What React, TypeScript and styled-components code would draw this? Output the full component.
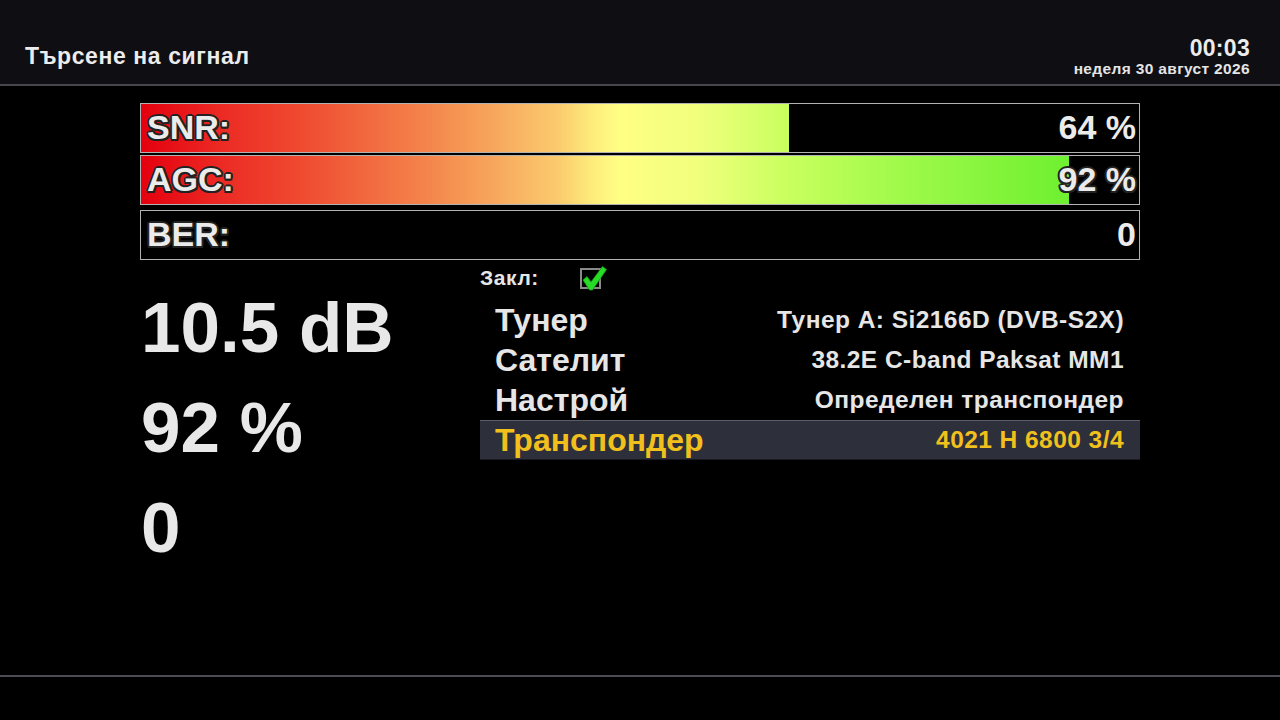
import React from "react";
import styled, { createGlobalStyle } from "styled-components";

const GlobalStyle = createGlobalStyle`
  html, body { margin: 0; padding: 0; background: #000; }
  body { font-family: "Liberation Sans", Arial, sans-serif; color: #e8e8e8; }
  * { box-sizing: border-box; }
`;

const Page = styled.div`
  width: 1280px;
  height: 720px;
  background: #000;
  display: flex;
  flex-direction: column;
  overflow: hidden;
`;

const Header = styled.header`
  height: 86px;
  flex: none;
  background: #0e0e13;
  border-bottom: 2px solid #46464d;
  display: flex;
  justify-content: space-between;
  align-items: flex-end;
  padding: 0 30px 6px 25px;
`;

const Title = styled.h1`
  margin: 0 0 9px 0;
  font-size: 23px;
  font-weight: 700;
  letter-spacing: 0.6px;
  color: #ececec;
  line-height: 26px;
`;

const Clock = styled.div`
  display: flex;
  flex-direction: column;
  align-items: flex-end;
`;

const Time = styled.div`
  font-size: 23px;
  font-weight: 700;
  letter-spacing: 0.3px;
  line-height: 22px;
  color: #ececec;
`;

const DateText = styled.div`
  font-size: 15.5px;
  font-weight: 700;
  letter-spacing: 0.35px;
  line-height: 19px;
  color: #e4e4e4;
`;

const Main = styled.main`
  flex: 1;
  padding: 17px 140px 0 140px;
  display: flex;
  flex-direction: column;
`;

const GRADIENT =
  "linear-gradient(to right, #e4000e 0%, #ec2a24 8%, #ef4a30 16%, #f4864c 29%, #f7aa5e 36%, #fbcc6e 42%, #fdea7a 45%, #ffff84 48%, #f0ff7c 56%, #c8ff5e 65%, #a0fa4a 76%, #6ef030 93%, #62ec2a 100%)";

const Bar = styled.div<{ $fill: number; $gap: number }>`
  height: 50px;
  margin-top: ${(p) => p.$gap}px;
  border: 1px solid #b2b2b2;
  background-color: #000;
  background-image: linear-gradient(to right, transparent ${(p) => p.$fill}%, #000 ${(p) => p.$fill}%), ${GRADIENT};
  display: flex;
  justify-content: space-between;
  align-items: center;
  padding: 0 3px 2px 6px;
  font-size: 34px;
  font-weight: 700;
  color: #ebebeb;
`;

const OUTLINE =
  "-2px 0 #222, 2px 0 #222, 0 -2px #222, 0 2px #222, -1.5px -1.5px #222, 1.5px 1.5px #222, -1.5px 1.5px #222, 1.5px -1.5px #222";

const BarLabel = styled.span`
  text-shadow: ${OUTLINE};
`;

const BarValue = styled.span<{ $outlined?: boolean }>`
  text-shadow: ${(p) => (p.$outlined ? OUTLINE : "none")};
`;

const Lower = styled.div`
  display: flex;
`;

const BigColumn = styled.div`
  width: 340px;
  padding-top: 18px;
  display: flex;
  flex-direction: column;
`;

const BigValue = styled.div`
  font-size: 71px;
  font-weight: 700;
  line-height: 100px;
  color: #e8e8e8;
  padding-left: 1px;
`;

const InfoColumn = styled.div`
  flex: 1;
  display: flex;
  flex-direction: column;
`;

const LockRow = styled.div`
  height: 40px;
  padding-bottom: 4px;
  display: flex;
  align-items: center;
  gap: 41px;
  font-size: 21px;
  font-weight: 700;
  letter-spacing: 0.6px;
  color: #e6e6e6;
`;

const CheckBox = styled.span`
  position: relative;
  width: 21px;
  height: 21px;
  border: 2px solid #8a8a8a;
  display: inline-block;
`;

const CheckMark = styled.svg`
  position: absolute;
  left: -2px;
  top: -5px;
`;

const Row = styled.div<{ $active?: boolean }>`
  height: 40px;
  display: flex;
  justify-content: space-between;
  align-items: center;
  padding: 0 16px 0 15px;
  background: ${(p) => (p.$active ? "#2d2f3b" : "transparent")};
  border-top: 1px solid ${(p) => (p.$active ? "#5a5d68" : "transparent")};
  border-bottom: 1px solid ${(p) => (p.$active ? "#1a1b22" : "transparent")};
  color: ${(p) => (p.$active ? "#f2c01c" : "#e6e6e6")};
`;

const RowLabel = styled.span`
  font-size: 32px;
  font-weight: 700;
`;

const RowValue = styled.span`
  font-size: 24.5px;
  font-weight: 700;
  letter-spacing: 0.45px;
`;

const Footer = styled.footer`
  height: 45px;
  flex: none;
  border-top: 2px solid #4c4c54;
`;

const bars = [
  { label: "SNR:", value: "64 %", fill: 64.9, gap: 0, outlined: false },
  { label: "AGC:", value: "92 %", fill: 93, gap: 2, outlined: true },
  { label: "BER:", value: "0", fill: 0, gap: 5, outlined: false },
];

const rows = [
  { label: "Тунер", value: "Тунер A: Si2166D (DVB-S2X)" },
  { label: "Сателит", value: "38.2E C-band Paksat MM1" },
  { label: "Настрой", value: "Определен транспондер" },
  { label: "Транспондер", value: "4021 H 6800 3/4", active: true },
];

export default function App() {
  return (
    <Page>
      <GlobalStyle />
      <Header>
        <Title>Търсене на сигнал</Title>
        <Clock>
          <Time>00:03</Time>
          <DateText>неделя 30 август 2026</DateText>
        </Clock>
      </Header>
      <Main>
        {bars.map((b) => (
          <Bar key={b.label} $fill={b.fill} $gap={b.gap}>
            <BarLabel>{b.label}</BarLabel>
            <BarValue $outlined={b.outlined}>{b.value}</BarValue>
          </Bar>
        ))}
        <Lower>
          <BigColumn>
            <BigValue>10.5 dB</BigValue>
            <BigValue>92 %</BigValue>
            <BigValue>0</BigValue>
          </BigColumn>
          <InfoColumn>
            <LockRow>
              <span>Закл:</span>
              <CheckBox>
                <CheckMark width="28" height="28" viewBox="0 0 28 28">
                  <path
                    d="M3 15 L7 11.5 L11 17 L22.5 1.5 L26.5 4.5 L12.5 25 L9.5 25 Z"
                    fill="#26dc26"
                    stroke="#149a14"
                    strokeWidth="0.8"
                    strokeLinejoin="round"
                  />
                </CheckMark>
              </CheckBox>
            </LockRow>
            {rows.map((r) => (
              <Row key={r.label} $active={r.active}>
                <RowLabel>{r.label}</RowLabel>
                <RowValue>{r.value}</RowValue>
              </Row>
            ))}
          </InfoColumn>
        </Lower>
      </Main>
      <Footer />
    </Page>
  );
}
